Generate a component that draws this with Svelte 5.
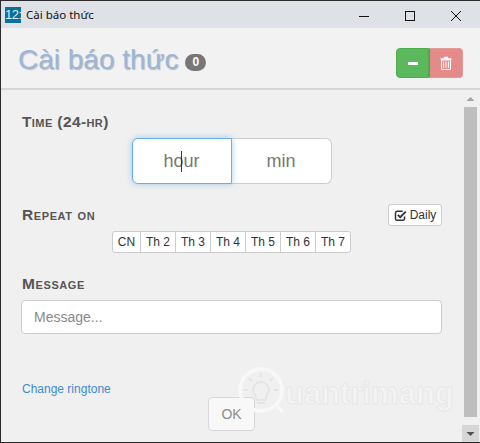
<script>
  const days = ['CN', 'Th 2', 'Th 3', 'Th 4', 'Th 5', 'Th 6', 'Th 7'];
</script>

<div class="window">
  <div class="titlebar">
    <div class="appicon">12:</div>
    <span class="wintitle">Cài báo thức</span>
    <div class="controls">
      <svg width="46" height="27" viewBox="0 0 46 27"><path d="M18 15.500h10" stroke="#111" stroke-width="1" fill="none"/></svg>
      <svg width="46" height="27" viewBox="0 0 46 27"><rect x="18.500" y="10.500" width="9" height="9" stroke="#111" stroke-width="1" fill="none"/></svg>
      <svg width="46" height="27" viewBox="0 0 46 27"><path d="M18 10l10 10M28 10l-10 10" stroke="#111" stroke-width="1" fill="none"/></svg>
    </div>
  </div>

  <header class="head">
    <h1>Cài báo thức</h1>
    <span class="badge">0</span>
    <div class="actions">
      <button class="btn-green" aria-label="Collapse"><span class="dash"></span></button>
      <button class="btn-red" aria-label="Delete">
        <svg width="14" height="14" viewBox="0 0 14 14"><path d="M5 1.500h4M1.500 3h11" stroke="#fff" stroke-width="1.400" fill="none"/><path d="M2.500 4h9v9.500h-9z M4.600 5.500v6.500M7 5.500v6.500M9.400 5.500v6.500" stroke="#fff" stroke-width="1" fill="none"/></svg>
      </button>
    </div>
  </header>

  <div class="main">
    <div class="content">
      <h2 class="time-label">Time (24-hr)</h2>
      <div class="time-group">
        <div class="t hour"><span class="hour-text">h<span class="caret"></span>our</span></div>
        <div class="t minute">min</div>
      </div>

      <div class="repeat-row">
        <h2>Repeat on</h2>
        <button class="daily">
          <svg width="13" height="13" viewBox="0 0 13 13"><path d="M10.500 7.500v2.200a1.600 1.600 0 0 1-1.600 1.600H3.100a1.600 1.600 0 0 1-1.600-1.600V3.900a1.600 1.600 0 0 1 1.600-1.600h5.600" stroke="#333" stroke-width="1.500" fill="none"/><path d="M3.800 5.800l2.400 2.400 5.600-5.600" stroke="#333" stroke-width="1.800" fill="none"/></svg>
          Daily
        </button>
      </div>
      <div class="days">
        {#each days as d}<button class="day">{d}</button>{/each}
      </div>

      <h2 class="msg-label">Message</h2>
      <div class="msg">Message...</div>

      <a class="ring" href="#ring">Change ringtone</a>
      <div class="ok-row"><button class="ok">OK</button></div>
    </div>
    <div class="scrollbar">
      <svg class="arrow" width="17" height="17" viewBox="0 0 17 17"><path d="M4.500 11h8l-4-4z" fill="#a3a3a3"/></svg>
      <div class="thumb"></div>
      <svg class="arrow down" width="17" height="17" viewBox="0 0 17 17"><path d="M4.500 7h8l-4 4z" fill="#505050"/></svg>
    </div>
  </div>

  <div class="wm" aria-hidden="true">
    <svg width="48" height="50" viewBox="0 0 48 50">
      <circle cx="23" cy="23" r="21" fill="none" stroke="#f8f8f8" stroke-width="3.500"/>
      <path d="M38 38l7 7" stroke="#f8f8f8" stroke-width="3.500"/>
      <path d="M23 15a8 8 0 0 0-5 14v4h10v-4a8 8 0 0 0-5-14z" fill="none" stroke="#e2e2e2" stroke-width="1.500"/>
      <path d="M23 6v4M11 11l3 3M35 11l-3 3M6 23h4M36 23h4M19 36h8" stroke="#e0e0e0" stroke-width="1.500"/>
    </svg>
    <span>uantrimang</span>
  </div>
</div>

<style>
  :global(body) { margin: 0; background: #f0f0f0; }
  * { box-sizing: border-box; }
  .window {
    position: relative;
    width: 480px; height: 443px; overflow: hidden;
    display: flex; flex-direction: column;
    border: solid #2b2b2b; border-width: 1px 0 1px 1px;
    font-family: "Liberation Sans", Arial, sans-serif;
    background: #f0f0f0;
  }
  .titlebar {
    height: 27px; flex: none;
    display: flex; align-items: center;
    background: #dee1e6; padding-left: 4px;
  }
  .appicon {
    width: 16px; height: 16px; background: #0b6f9c; color: #dceef5;
    font: 13px/16px "Liberation Sans", sans-serif; text-align: center; overflow: hidden;
    letter-spacing: -0.5px;
  }
  .wintitle { margin-left: 5px; font: 11.500px "Noto Sans", sans-serif; color: #111; }
  .controls { margin-left: auto; display: flex; margin-right: 1px; }
  .controls svg { display: block; }
  .head {
    height: 62px; flex: none;
    display: flex; align-items: center;
    padding: 10px 17px 0;
    background: #f2f2f2;
    border-bottom: 2px solid #d6d6d6;
  }
  h1 {
    margin: 0 0 6px; font-size: 28px; font-weight: 400; color: #9cb6da;
    text-shadow: 1px 1px 1px #b9bcc4;
  }
  .badge {
    margin: 0 0 2px 7px; width: 21px; height: 17px; border-radius: 10px;
    background: #777; color: #fff; font-size: 12px; font-weight: 700;
    text-align: center; line-height: 17px;
  }
  .actions { margin-left: auto; display: flex; }
  .actions button {
    height: 30px; padding: 0; display: flex; align-items: center; justify-content: center;
  }
  .btn-green { width: 33px; background: #5cb85c; border: 1px solid #4cae4c; border-radius: 4px 0 0 4px; }
  .btn-red { width: 34px; background: #e48a88; border: 1px solid #e39a98; border-left-color: #c9605c; border-radius: 0 4px 4px 0; }
  .dash { width: 10px; height: 3px; background: #fff; }
  .main { flex: 1; min-height: 0; display: flex; padding-right: 1px; }
  .content { flex: 1; padding: 0 20px; position: relative; }
  h2 {
    margin: 0; font-size: 15.500px; font-weight: 700; font-variant: small-caps;
    color: #555; letter-spacing: 0.6px; line-height: 18px;
  }
  .time-label, .repeat-row h2, .msg-label { padding-left: 1px; }
  .time-label { margin-top: 23px; letter-spacing: 0.4px; }
  .time-group { display: flex; justify-content: center; margin-top: 7px; }
  .t {
    width: 100px; height: 46px; background: #fff; border: 1px solid #ccc;
    font-size: 18px; color: #777; display: flex; align-items: center; justify-content: center;
  }
  .hour { border-radius: 6px 0 0 6px; border-color: #66afe9; box-shadow: 0 0 6px rgba(102,175,233,.6); position: relative; }
  .minute { border-radius: 0 6px 6px 0; border-left: none; }
  .hour-text { position: relative; }
  .caret { position: absolute; left: 18px; top: 0; width: 1px; height: 21px; background: #333; }
  .repeat-row { display: flex; justify-content: space-between; align-items: center; margin-top: 20px; }
  .daily {
    width: 54px; height: 22px; padding: 0; background: #fff; border: 1px solid #ccc; border-radius: 3px;
    font: 12px "Liberation Sans", sans-serif; color: #333;
    display: flex; align-items: center; justify-content: center; gap: 3px;
  }
  .days { display: flex; justify-content: center; margin-top: 5px; }
  .day {
    width: 36px; height: 22px; padding: 0; margin-left: -1px; background: #fff; border: 1px solid #ccc;
    font: 12px "Liberation Sans", sans-serif; color: #333;
  }
  .day:first-child { width: 29px; margin-left: 0; border-radius: 3px 0 0 3px; }
  .day:last-child { border-radius: 0 3px 3px 0; }
  .msg-label { margin-top: 22px; }
  .msg {
    margin-top: 7px; height: 34px; background: #fff; border: 1px solid #ccc; border-radius: 4px;
    font-size: 14px; color: #8a8a8a; padding: 0 12px; line-height: 32px;
  }
  .ring { display: block; margin-top: 48px; padding-left: 1px; font-size: 12px; color: #428bca; text-decoration: none; line-height: 14px; }
  .ok-row { display: flex; justify-content: center; margin-top: 1px; }
  .ok {
    width: 47px; height: 34px; padding: 0; background: #f8f8f8; border: 1px solid #d8d8d8; border-radius: 4px;
    font: 14px "Liberation Sans", sans-serif; color: #8c8c8c;
  }
  .scrollbar { width: 17px; flex: none; display: flex; flex-direction: column; }
  .arrow { display: block; flex: none; }
  .arrow.down { background: #d6d6d6; }
  .thumb { flex: 1; background: #bebebe; margin: 0 2px 8px; }
  .wm {
    position: absolute; left: 237px; top: 366px; display: flex; align-items: center; pointer-events: none;
  }
  .wm span {
    margin-left: -1px; margin-top: 4px; font: 700 31px "Liberation Sans", sans-serif; color: #f4f4f4;
    -webkit-text-stroke: 1px #e8e8e8;
  }
</style>
